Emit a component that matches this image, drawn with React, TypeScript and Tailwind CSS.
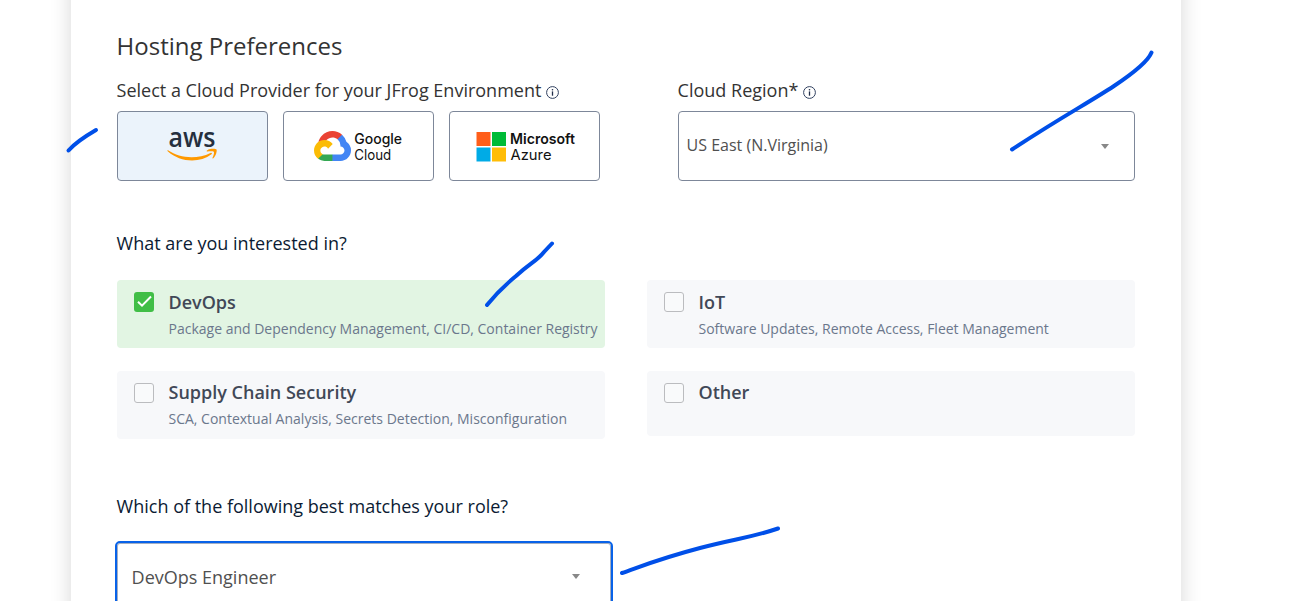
import type { ReactNode } from "react";

const InfoIcon = () => (
  <svg width="13" height="13" viewBox="0 0 13 13" className="mt-[5px] shrink-0" fill="none">
    <circle cx="6.5" cy="6.5" r="5.9" stroke="#30405f" strokeWidth="1" />
    <path d="M6.500 5.400v4.300" stroke="#1f2c48" strokeWidth="1.300" />
    <circle cx="6.5" cy="3.700" r="0.800" fill="#1f2c48" />
  </svg>
);

const Caret = () => (
  <svg width="8" height="5" viewBox="0 0 8 5" className="shrink-0">
    <path d="M0 0h8L4 5z" fill="#888" />
  </svg>
);

const AwsLogo = () => (
  <svg width="61" height="60" viewBox="0 -16 61 60">
    <text x="6.500" y="15" fontFamily="Open Sans, sans-serif" fontSize="27" fontWeight="600" fill="#252f3e" textLength="47" lengthAdjust="spacingAndGlyphs">aws</text>
    <g transform="translate(0 -10)">
      <path d="M6 28.300c12 8.200 29 9.300 42.500 2.600 1.200-.6 2 .6 1 1.400C37.500 41.500 18 40.500 5.700 29.300c-.6-.6-.2-1.200.3-1z" fill="#ff9900" />
      <path d="M45 28.400c3-2 8.700-1.900 9.500-.9.700 1-.4 6.500-3.200 8.800-.6.400-1.100.1-.8-.5.700-1.700 2-5 1.400-5.900-.6-.8-4.500-.6-6.300-.5-.9.100-1.200-.5-.6-1z" fill="#ff9900" />
    </g>
  </svg>
);

const CloudMark = () => (
  <svg width="37" height="30" viewBox="0 0 256 206" preserveAspectRatio="none">
    <path fill="#EA4335" d="m170.252 56.819 22.253-22.253 1.483-9.370C153.437-11.677 88.976-7.496 52.420 33.920 42.267 45.423 34.734 59.764 30.717 74.573l7.970-1.123 44.505-7.340 3.436-3.513c19.797-21.742 53.270-24.667 76.128-6.168l7.496.39z" />
    <path fill="#4285F4" d="M224.205 73.918a100.249 100.249 0 0 0-30.217-48.722l-31.232 31.232a55.515 55.515 0 0 1 20.379 44.037v5.544c15.350 0 27.797 12.450 27.797 27.796 0 15.352-12.446 27.573-27.797 27.573h-55.671l-5.466 5.934v33.340l5.466 5.231h55.670c39.930.311 72.553-31.494 72.864-71.424a72.303 72.303 0 0 0-31.793-60.541" />
    <path fill="#34A853" d="M71.870 205.796h55.593V161.290H71.870a27.275 27.275 0 0 1-11.479-2.498l-7.887 2.420-22.409 22.253-1.952 7.574a72.187 72.187 0 0 0 43.727 14.757" />
    <path fill="#FBBC05" d="M71.870 61.425C31.940 61.664-.237 94.228.001 134.158a72.301 72.301 0 0 0 28.222 56.881l32.248-32.246c-13.990-6.322-20.208-22.786-13.887-36.776 6.320-13.990 22.786-20.208 36.775-13.888a27.796 27.796 0 0 1 13.887 13.888l32.248-32.248a72.224 72.224 0 0 0-57.624-28.344" />
  </svg>
);

const GoogleCloudLogo = () => (
  <svg width="101" height="46" viewBox="-5 -5 101 46">
    <g transform="translate(1 3)"><CloudMark /></g>
    <text x="41.300" y="15.500" fontFamily="Inter, sans-serif" fontSize="14.500" fontWeight="500" fill="#111" textLength="47.800" lengthAdjust="spacingAndGlyphs">Google</text>
    <text x="41.300" y="32" fontFamily="Inter, sans-serif" fontSize="14.500" fill="#111" textLength="37" lengthAdjust="spacingAndGlyphs">Cloud</text>
  </svg>
);

const AzureLogo = () => (
  <svg width="110" height="46" viewBox="-6 -5 110 46">
    <path fill="#ff5e1a" d="M1.500 4h14v14h-14z" />
    <path fill="#00bb36" d="M17 4h14v14H17z" />
    <path fill="#00abe6" d="M1.500 19.500h14v14h-14z" />
    <path fill="#ffbd07" d="M17 19.500h14v14H17z" />
    <text x="35" y="16" fontFamily="Inter, sans-serif" fontSize="14.500" fontWeight="600" fill="#111" textLength="65" lengthAdjust="spacingAndGlyphs">Microsoft</text>
    <text x="35.500" y="32" fontFamily="Inter, sans-serif" fontSize="14.500" fill="#111" textLength="41" lengthAdjust="spacingAndGlyphs">Azure</text>
  </svg>
);

const Provider = ({ selected, label, children }: { selected?: boolean; label: string; children: ReactNode }) => (
  <button
    aria-label={label}
    className={`flex h-[70px] w-[151px] items-center justify-center rounded-[4px] border border-[#7d8799] ${selected ? "bg-[#ebf3fb]" : "bg-white"}`}
  >
    {children}
  </button>
);

const Interest = ({ title, text, checked, lower }: { title: string; text?: string; checked?: boolean; lower?: boolean }) => (
  <div className={`flex rounded-[4px] pl-[17px] ${text ? "h-[68px]" : "h-[65px]"} ${checked ? "bg-[#e2f5e3]" : "bg-[#f7f8fa]"}`}>
    <span className={`mt-3 mr-[14.9px] flex size-5 shrink-0 items-center justify-center rounded-[3px] ${checked ? "bg-[#40be46]" : "border border-[#bbbcbf] bg-[#f9fafb]"}`}>
      {checked && (
        <svg width="20" height="20" viewBox="0 0 20 20" fill="none">
          <path d="M4 9.700l4 4 9-9.200" stroke="#fff" strokeWidth="2" />
        </svg>
      )}
    </span>
    <div className={`whitespace-nowrap ${lower ? "pt-2" : "pt-[9px]"}`}>
      <div className="text-[18px] leading-[26px] font-semibold text-[#414857]">{title}</div>
      {text && <div className="pt-[3px] text-[14px] leading-[22px] text-[#6b778c]">{text}</div>}
    </div>
  </div>
);

export default function App() {
  return (
    <div className="relative h-[601px] w-[1292px] overflow-hidden bg-white font-['Open_Sans',sans-serif]">
      <main className="-mt-10 flex h-[641px] pl-[71px]">
        <div className="h-[690px] w-[1110px] shrink-0 bg-white pt-[69px] pr-[46px] pl-[45.6px] shadow-[0_0_20px_rgba(0,0,0,0.16)]">
          <h1 className="text-[24px] leading-[33px] text-[#333]">Hosting Preferences</h1>
          <div className="mt-[15px] flex">
            <section className="w-[561px]">
              <div className="flex h-[34px] items-start gap-[5px] text-[18px] leading-[26px] text-[#333]">
                Select a Cloud Provider for your JFrog Environment
                <span className="pt-[4px]"><InfoIcon /></span>
              </div>
              <div className="flex gap-[15px]">
                <Provider selected label="AWS"><AwsLogo /></Provider>
                <Provider label="Google Cloud"><GoogleCloudLogo /></Provider>
                <Provider label="Microsoft Azure"><AzureLogo /></Provider>
              </div>
            </section>
            <section className="w-[457px]">
              <div className="flex h-[34px] items-start gap-[5px] text-[18px] leading-[26px] text-[#333]">
                Cloud Region*
                <span className="pt-[4px]"><InfoIcon /></span>
              </div>
              <div className="flex h-[70px] items-center justify-between rounded-[4px] border border-[#7d8799] pr-[25px] pl-2 text-[16px] text-[#505050]">
                <span className="-mt-[2px]">US East (N.Virginia)</span>
                <Caret />
              </div>
            </section>
          </div>
          <h2 className="mt-[49px] text-[18px] leading-[26px] text-[#0b1b33]">What are you interested in?</h2>
          <div className="mt-6 grid grid-cols-[488px_488px] items-start gap-x-[42px] gap-y-[23px]">
            <Interest checked title="DevOps" text="Package and Dependency Management, CI/CD, Container Registry" />
            <Interest title="IoT" text="Software Updates, Remote Access, Fleet Management" />
            <Interest lower title="Supply Chain Security" text="SCA, Contextual Analysis, Secrets Detection, Misconfiguration" />
            <Interest lower title="Other" />
          </div>
          <h2 className="mt-[54px] text-[18px] leading-[26px] text-[#0b1b33]">Which of the following best matches your role?</h2>
          <div className="mt-[22px] -ml-[1.6px] flex h-[72px] w-[498px] items-center justify-between rounded-[5px] border-2 border-[#0862e8] pr-[31px] pl-[14.6px] text-[18px] text-[#505050] shadow-[inset_0_0_0_1px_#a3aec2]">
            DevOps Engineer
            <span className="-mt-[2px] flex"><Caret /></span>
          </div>
        </div>
      </main>
      <svg className="pointer-events-none absolute inset-0" width="1292" height="601" fill="none" stroke="#004fe8" strokeWidth="4" strokeLinecap="round">
        <path d="M68.500 150.500C75 143 84 137 96 130" />
        <path d="M1012 149.500C1060 118 1088 103 1114 86Q1147 64 1151.500 52.500" />
        <path d="M487 305Q500 289 516 276C530 263 537 261 544 252L552 243.500" />
        <path d="M622 573C650 563 662 558 700 548S750 538 778 528.500" />
      </svg>
    </div>
  );
}
